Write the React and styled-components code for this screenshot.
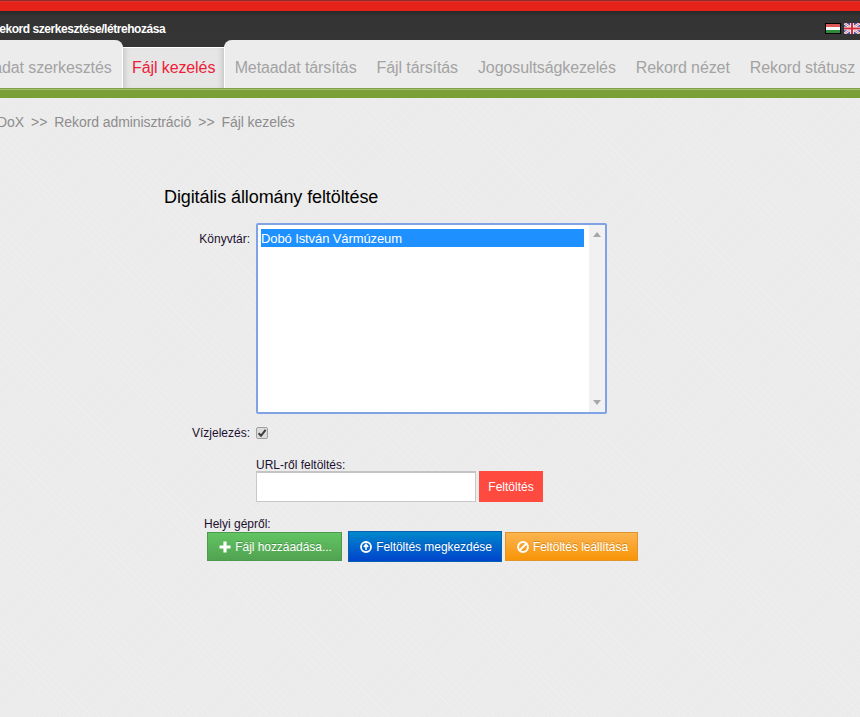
import React from "react";
import styled, { createGlobalStyle } from "styled-components";

const Global = createGlobalStyle`
  html, body { margin: 0; padding: 0; height: 100%; overflow: hidden; }
  body {
    font-family: "Liberation Sans", Arial, sans-serif;
    background-color: #ececec;
    background-image:
      repeating-linear-gradient(45deg, rgba(255,255,255,.1) 0 1px, transparent 1px 5px),
      repeating-linear-gradient(-45deg, rgba(0,0,0,.008) 0 1px, transparent 1px 3px);
  }
  #root { width: 860px; height: 717px; overflow: hidden; }
`;

const RedBar = styled.div`
  height: 11px;
  background: #e5231b;
  border-top: 1px solid #8f2a26;
  box-sizing: border-box;
  box-shadow: inset 0 1px 0 #d8362f;
`;

const TopBar = styled.header`
  height: 29px;
  background: linear-gradient(#272727 0, #343434 5px, #353535 100%);
  display: flex;
  align-items: flex-start;
  justify-content: space-between;
  overflow: hidden;
`;

const PageTitle = styled.h1`
  margin: 11px 0 0 -9px;
  font-size: 12px;
  line-height: 14px;
  font-weight: 700;
  letter-spacing: -0.45px;
  color: #fff;
  white-space: nowrap;
`;

const Flags = styled.div`
  display: flex;
  gap: 3px;
  margin-top: 12px;
`;

const TabBar = styled.nav`
  height: 48px;
  background: #353535;
  display: flex;
  overflow: hidden;
`;

const TabGroup = styled.div`
  display: flex;
  flex: ${p => (p.$grow ? "1 0 auto" : "none")};
  margin-left: ${p => p.$offset || 0}px;
  height: 48px;
  background: #ececec;
  border-radius: ${p => (p.$grow ? "8px 0 0 0" : "0 8px 0 0")};
  border-right: ${p => (p.$grow ? "none" : "1px solid #fff")};
  border-left: ${p => (p.$grow ? "1px solid #fff" : "none")};
  box-sizing: border-box;
`;

const Tab = styled.a`
  flex: none;
  padding: 0 10px;
  height: 48px;
  line-height: 56px;
  font-size: 16px;
  letter-spacing: -0.1px;
  color: #a3a3a3;
  white-space: nowrap;
  box-sizing: border-box;
`;

const ActiveTab = styled.a`
  flex: none;
  width: 101px;
  height: 41px;
  margin-top: 7px;
  padding-left: 1px;
  text-align: center;
  line-height: 39px;
  font-size: 16px;
  letter-spacing: -0.1px;
  color: #ee2038;
  white-space: nowrap;
  background: #e6e6e6;
  border-top: 1px solid #fff;
  box-sizing: border-box;
  box-shadow: inset 6px 0 6px -5px #bbb, inset -6px 0 6px -5px #bbb;
`;

const GreenBar = styled.div`
  height: 10px;
  box-sizing: border-box;
  background: #7b9f37;
  border-top: 1px solid #7f9f45;
  box-shadow: inset 0 1px 0 #a6c06f;
`;

const Crumbs = styled.div`
  margin: 15px 0 0 -3px;
  font-size: 14px;
  line-height: 18px;
  letter-spacing: -0.07px;
  color: #8d8d8d;
  display: flex;
  gap: 7px;
  white-space: nowrap;
`;

const Form = styled.main`
  margin-left: 164px;
`;

const Heading = styled.h2`
  margin: 55px 0 0;
  font-size: 18px;
  line-height: 22px;
  font-weight: 400;
  color: #000;
  letter-spacing: -0.1px;
`;

const Row = styled.div`
  display: flex;
  align-items: flex-start;
  margin-top: ${p => p.$top || 0}px;
`;

const Label = styled.label`
  width: 86px;
  text-align: right;
  font-size: 12px;
  line-height: 14px;
  color: #1c1030;
  white-space: nowrap;
  padding-top: ${p => p.$pad || 0}px;
`;

const ListBox = styled.div`
  margin-left: 6px;
  width: 351px;
  height: 191px;
  box-sizing: border-box;
  border: 2px solid #80a3e6;
  border-radius: 2px;
  background: #fff;
  display: flex;
  justify-content: space-between;
`;

const Option = styled.div`
  margin: 4px 0 0 3px;
  width: 323px;
  height: 18px;
  padding-top: 1px;
  background: #1e90ff;
  color: #fff;
  font-size: 13px;
  line-height: 17px;
  letter-spacing: -0.1px;
  box-sizing: border-box;
`;

const Scrollbar = styled.div`
  width: 16px;
  background: #f1f1f1;
  display: flex;
  flex-direction: column;
  justify-content: space-between;
  align-items: center;
  padding: 7px 0;
  box-sizing: border-box;
`;

const Arrow = styled.span`
  width: 0;
  height: 0;
  border-left: 4px solid transparent;
  border-right: 4px solid transparent;
  border-${p => (p.$down ? "top" : "bottom")}: 5px solid #a8a8a8;
`;

const CheckBox = styled.span`
  margin-left: 6px;
  margin-top: 1px;
  width: 12px;
  height: 12px;
  box-sizing: border-box;
  border: 1px solid #a0a0a0;
  border-radius: 2px;
  background: #dcdcdc;
  display: flex;
  align-items: center;
  justify-content: center;
`;

const FieldBlock = styled.div`
  margin-left: 92px;
  margin-top: 19px;
`;

const FieldLabel = styled.div`
  font-size: 12px;
  line-height: 12px;
  color: #1c1030;
`;

const UrlRow = styled.div`
  display: flex;
  gap: 3px;
`;

const UrlInput = styled.input`
  width: 220px;
  height: 31px;
  box-sizing: border-box;
  border: 1px solid #c9c9c9;
  border-top: 2px solid #c4c4c4;
  background: #fff;
  padding: 0;
  outline: none;
`;

const SubmitButton = styled.button`
  width: 64px;
  height: 31px;
  border: 0;
  padding: 0;
  background: #ff4a3f;
  color: #fff;
  font: 12px "Liberation Sans", Arial, sans-serif;
`;

const LocalLabel = styled.div`
  margin: 15px 0 0 40px;
  font-size: 12px;
  line-height: 14px;
  color: #1c1030;
`;

const Buttons = styled.div`
  display: flex;
  align-items: center;
  margin: 0 0 0 43px;
`;

const tones = {
  green: "border:1px solid #4c9a4c;background:linear-gradient(#62c462,#51a351);",
  blue: "border:1px solid #0a5fb0;background:linear-gradient(#0088cc,#0044cc);",
  orange: "border:1px solid #e0952a;background:linear-gradient(#fbb450,#f89406);",
};

const ActionButton = styled.button`
  ${p => tones[p.$tone]}
  width: ${p => p.$w}px;
  height: ${p => p.$h}px;
  margin-left: ${p => p.$gap || 0}px;
  box-sizing: border-box;
  padding: 0 0 0 2px;
  display: flex;
  align-items: center;
  justify-content: center;
  gap: 4px;
  color: #fff;
  font: 12px "Liberation Sans", Arial, sans-serif;
  letter-spacing: -0.05px;
  text-shadow: 0 -1px 0 rgba(0, 0, 0, 0.2);
  white-space: nowrap;
`;

const HuFlag = () => (
  <svg width="16" height="11" viewBox="0 0 16 11">
    <rect width="16" height="11" fill="#000" />
    <rect x="1" y="1" width="14" height="3" fill="#dc5a5a" />
    <rect x="1" y="4" width="14" height="3" fill="#fff" />
    <rect x="1" y="7" width="14" height="3" fill="#2f8a3a" />
  </svg>
);

const UkFlag = () => (
  <svg width="16" height="11" viewBox="0 0 16 11">
    <rect width="16" height="11" fill="#4a55a8" />
    <path d="M0 0L16 11M16 0L0 11" stroke="#fff" strokeWidth="2.4" />
    <path d="M0 0L16 11M16 0L0 11" stroke="#d04a5a" strokeWidth="0.8" />
    <path d="M8 0V11M0 5.5H16" stroke="#fff" strokeWidth="3.6" />
    <path d="M8 0V11M0 5.5H16" stroke="#d62a3a" strokeWidth="2" />
  </svg>
);

const Check = () => (
  <svg width="10" height="10" viewBox="0 0 10 10">
    <path d="M1.6 5.2L4 7.8L8.6 1.8" fill="none" stroke="#3d3d3d" strokeWidth="2" />
  </svg>
);

const PlusIcon = () => (
  <svg width="12" height="12" viewBox="0 0 12 12">
    <path d="M6 .5V11.5M.5 6H11.5" stroke="#fff" strokeWidth="3.2" />
  </svg>
);

const UploadIcon = () => (
  <svg width="12" height="12" viewBox="0 0 12 12">
    <circle cx="6" cy="6" r="5" fill="none" stroke="#fff" strokeWidth="1.8" />
    <path d="M6 9V4.5M3.8 6L6 3.4L8.2 6" fill="none" stroke="#fff" strokeWidth="1.6" />
  </svg>
);

const BanIcon = () => (
  <svg width="12" height="12" viewBox="0 0 12 12">
    <circle cx="6" cy="6" r="4.9" fill="none" stroke="#fff" strokeWidth="2" />
    <path d="M2.6 9.4L9.4 2.6" stroke="#fff" strokeWidth="2" />
  </svg>
);

export default function App() {
  return (
    <>
      <Global />
      <RedBar />
      <TopBar>
        <PageTitle>Rekord szerkesztése/létrehozása</PageTitle>
        <Flags>
          <HuFlag />
          <UkFlag />
        </Flags>
      </TopBar>
      <TabBar>
        <TabGroup $offset={-52}>
          <Tab>Metaadat szerkesztés</Tab>
        </TabGroup>
        <ActiveTab>Fájl kezelés</ActiveTab>
        <TabGroup $grow>
          <Tab>Metaadat társítás</Tab>
          <Tab>Fájl társítás</Tab>
          <Tab>Jogosultságkezelés</Tab>
          <Tab>Rekord nézet</Tab>
          <Tab>Rekord státusz</Tab>
        </TabGroup>
      </TabBar>
      <GreenBar />
      <Crumbs>
        <span>DoX</span>
        <span>&gt;&gt;</span>
        <span>Rekord adminisztráció</span>
        <span>&gt;&gt;</span>
        <span>Fájl kezelés</span>
      </Crumbs>
      <Form>
        <Heading>Digitális állomány feltöltése</Heading>
        <Row $top={15}>
          <Label $pad={9}>Könyvtár:</Label>
          <ListBox>
            <Option>Dobó István Vármúzeum</Option>
            <Scrollbar>
              <Arrow />
              <Arrow $down />
            </Scrollbar>
          </ListBox>
        </Row>
        <Row $top={12}>
          <Label>Vízjelezés:</Label>
          <CheckBox>
            <Check />
          </CheckBox>
        </Row>
        <FieldBlock>
          <FieldLabel>URL-ről feltöltés:</FieldLabel>
          <UrlRow>
            <UrlInput />
            <SubmitButton>Feltöltés</SubmitButton>
          </UrlRow>
        </FieldBlock>
        <LocalLabel>Helyi gépről:</LocalLabel>
        <Buttons>
          <ActionButton $tone="green" $w={135} $h={29}>
            <PlusIcon />
            Fájl hozzáadása...
          </ActionButton>
          <ActionButton $tone="blue" $w={154} $h={31} $gap={6}>
            <UploadIcon />
            Feltöltés megkezdése
          </ActionButton>
          <ActionButton $tone="orange" $w={133} $h={29} $gap={3}>
            <BanIcon />
            Feltöltés leállítása
          </ActionButton>
        </Buttons>
      </Form>
    </>
  );
}
